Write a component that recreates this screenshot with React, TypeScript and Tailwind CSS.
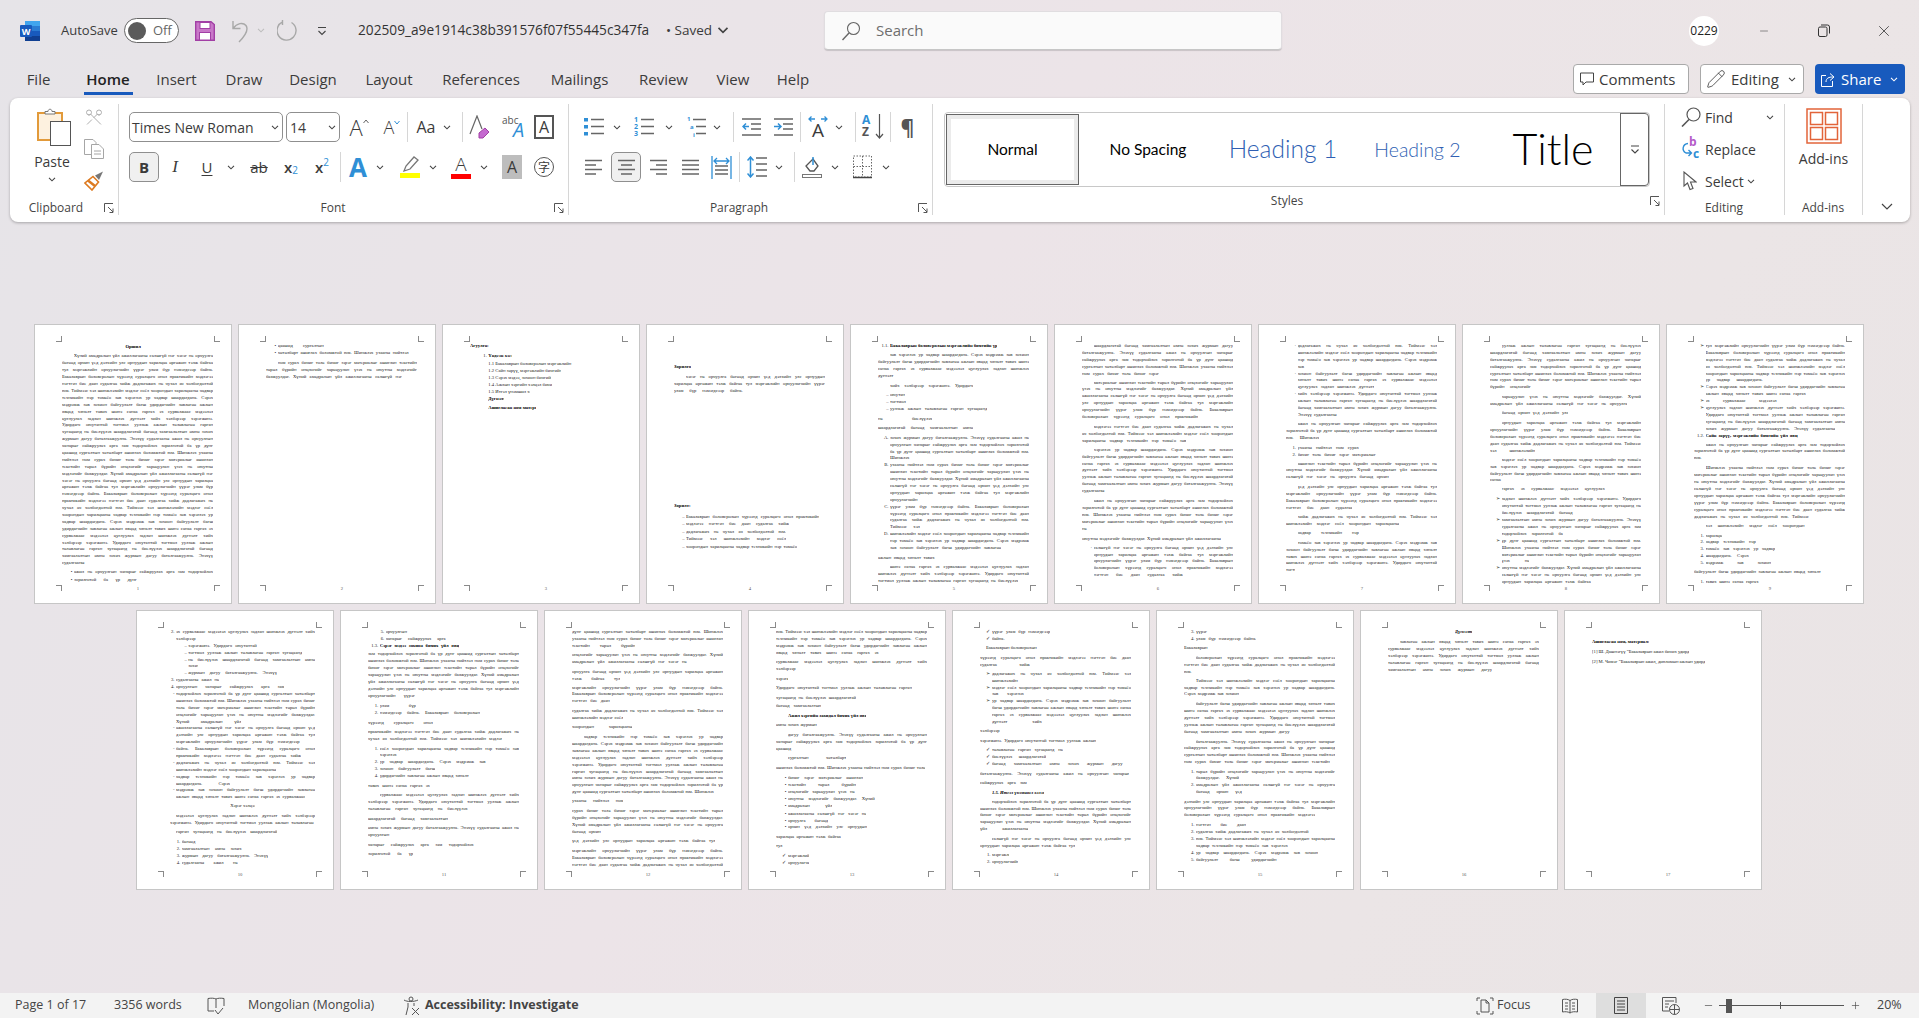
import { Minus, Pencil, Plus, Scissors, X } from "lucide-react";
import type { ReactNode } from "react";

// thumbnails: every page is a list of text blocks, broken into lines by hand
const CORPUS =
  "Хүний амьдралын үйл ажиллагааны салшгүй нэг хэсэг нь орчуулга бөгөөд орчин үед дэлхийн улс орнуудын харилцаа өргөжин тэлж байгаа тул мэргэжлийн орчуулагчийн үүрэг улам бүр нэмэгдсээр байна. Бакалаврын боловсролын хүрээнд суралцагч онол практикийн мэдлэгээ нэгтгэн бие даан судалгаа хийж дадлагажих нь чухал ач холбогдолтой юм. Тиймээс хэл шинжлэлийн мэдлэг соёл хоорондын харилцааны чадвар техникийн нэр томьёо зөв хэрэглэх ур чадвар шаардагдана. Сэрэх мэдрэмж зөв зохион байгуулалт багш удирдагчийн зөвлөгөө ажлын явцад хяналт тавих шинэ санаа гаргах эх сурвалжаас мэдээлэл цуглуулах задлан шинжлэх дүгнэлт хийх хэлбэрээр хэрэгжинэ. Удирдагч оюутантай тогтмол уулзаж ажлын төлөвлөгөө гарган хугацаанд нь биелүүлэх шаардлагатай бөгөөд хамгаалалтын өмнө зохих журмын дагуу баталгаажуулна. Энэхүү судалгааны ажил нь орчуулгын чанарыг сайжруулах арга зам тодорхойлох зорилготой ба үр дүнг цаашид сургалтын хөтөлбөрт ашиглах боломжтой юм. Шинжлэх ухааны нийтлэл ном сурах бичиг толь бичиг зэрэг материалыг ашиглан текстийн төрөл бүрийн онцлогийг харьцуулан үзэх нь оюутны мэдлэгийг баяжуулдаг.".split(
    " ",
  );
let cursor = 0;
function take(width: number) {
  const max = width / 2.28;
  let out = "";
  do {
    out += (out ? " " : "") + CORPUS[cursor];
    cursor = (cursor + 1) % CORPUS.length;
  } while ((out + " " + CORPUS[cursor]).length < max);
  return out;
}

type Block = {
  n: number;
  last: number;
  gap: number;
  ind?: number;
  first?: number;
  mark?: string;
  bold?: boolean;
  italic?: boolean;
  center?: boolean;
  text?: string;
};
const par = (n: number, last: number, gap = 3.1): Block => ({ n, last, gap, first: 11.7 });
const txt = (n: number, last: number, gap = 3.1, ind = 0): Block => ({ n, last, gap, ind });
const li = (mark: string, ind: number, n: number, last: number, gap = 0): Block => ({ n, last, gap, ind, mark });
const head = (text: string, last: number, gap = 3.1, ind = 0, mark?: string): Block => ({ n: 1, last, gap, ind, text, bold: true, mark });
const line = (text: string, last: number, gap = 0, ind = 0): Block => ({ n: 1, last, gap, ind, text });

const SPEC: { left?: number; blocks: Block[] }[] = [
  {
    blocks: [
      { n: 1, last: 0.16, gap: 0.5, bold: true, center: true, text: "Оршил" },
      par(31, 0.15),
      li("•", 12, 1, 1, 2.4),
      li("•", 12, 1, 0.45, 1.1),
    ],
  },
  { blocks: [li("•", 11.7, 1, 0.33, 0), li("•", 11.7, 1, 0.94, 0.4), par(3, 0.9)] },
  {
    blocks: [
      head("Агуулга:", 0.124, 0.3),
      head("Үндсэн хэсэг", 0.175, 3.1, 18.3, "1."),
      line("1.1 Бакалаврын боловсролын мэргэжлийн ба үр дүн", 0.63, 0.7, 18.3),
      line("1.2 Сайн зөрүү, мэргэжлийн бичгийн ажлын зорилго", 0.545, 0.3, 18.3),
      line("1.3 Сэрэх мэдээ, зохион бичгийн үйл явц", 0.475, 0, 18.3),
      line("1.4 Ажлын хэргийн хэлцэл бичих ур чадвар", 0.48, 0, 18.3),
      line("1.5 Итгэл үнэмшил хэлэх", 0.317, 0, 18.3),
      head("Дүгнэлт", 0.115, 0, 18.3),
      head("Ашигласан ном материал", 0.36, 2.1, 18.3),
    ],
  },
  {
    blocks: [
      head("Зорилго:", 0.11, 20.9),
      par(3, 0.455),
      head("Зорилт:", 0.11, 108.1),
      li("–", 12, 1, 0.96, 4.1),
      li("–", 12, 1, 0.74, 0.1),
      li("–", 12, 1, 0.72, 1.1),
      li("–", 12, 1, 0.72, 0.1),
      li("–", 12, 1, 0.8, 1.1),
    ],
  },
  {
    blocks: [
      head("Бакалаврын боловсролын мэргэжлийн бичгийн үр дүн", 0.77, 0, 12, "1.1."),
      par(4, 0.18, 2.1),
      txt(1, 0.6, 3.1, 12),
      li("–", 12, 1, 0.11, 2.1),
      li("–", 12, 1, 0.13),
      li("–", 12, 1, 0.7, 0.4),
      txt(1, 0.36),
      txt(1, 0.63, 2.1),
      li("A.", 12, 4, 0.21, 3.1),
      li("B.", 12, 6, 0.23),
      li("C.", 12, 4, 0.215),
      li("D.", 12, 3, 0.8),
      txt(1, 0.375),
      par(3, 0.93, 2.1),
    ],
  },
  {
    blocks: [
      par(5, 0.51, 0),
      par(6, 0.77, 2.1),
      par(3, 0.69),
      par(7, 0.19, 2.1),
      par(5, 0.13),
      txt(1, 0.92),
      li("·", 11.5, 5, 0.64, 2.1),
    ],
  },
  {
    blocks: [
      li("·", 11.5, 4, 0.135),
      li("·", 11.5, 3, 0.55),
      li("·", 11.5, 4, 0.28),
      par(3, 0.22, 2.1),
      li("1.", 11.5, 1, 0.44, 3.1),
      li("2.", 11.5, 1, 0.56),
      par(3, 0.68, 2.1),
      par(4, 0.44),
      par(2, 0.75, 2.1),
      txt(1, 0.44, 2.1, 11.5),
      par(5, 0.06),
    ],
  },
  {
    blocks: [
      par(7, 0.27, 0),
      par(2, 0.91),
      txt(1, 0.48, 2.1, 11.5),
      par(5, 0.3),
      par(4, 0.11, 2.1),
      txt(1, 0.74, 2.1, 11.5),
      li("➢", 11.5, 3, 0.51, 3.1),
      li("➢", 11.5, 3, 0.44),
      li("➢", 11.5, 4, 0.2),
      li("➢", 11.5, 3, 0.64),
    ],
  },
  {
    blocks: [
      li("➢", 11.5, 6, 0.41),
      li("➢", 11.5, 2, 0.72),
      li("➢", 11.5, 1, 0.51),
      li("➢", 11.5, 4, 0.93),
      head("Сайн зөрүү, мэргэжлийн бичгийн үйл явц", 0.66, 0, 11.5, "1.2."),
      par(3, 0.15, 2.1),
      par(8, 0.76),
      txt(1, 0.71, 2.1, 11.5),
      li("1.", 11.5, 1, 0.12, 3.1),
      li("2.", 11.5, 1, 0.36),
      li("3.", 11.5, 1, 0.5),
      li("4.", 11.5, 1, 0.31),
      li("5.", 11.5, 1, 0.47),
      txt(1, 0.84, 2.1),
      li("1.", 11.5, 1, 0.38, 3.1),
    ],
  },
  {
    left: 34,
    blocks: [
      li("2.", 6, 2, 0.16),
      li("–", 18.3, 1, 0.54),
      li("–", 18.3, 1, 0.9),
      li("–", 18.3, 2, 0.08),
      li("–", 18.3, 1, 0.7),
      li("3.", 6, 1, 0.31),
      li("4.", 6, 1, 0.78),
      li("-", 6, 5, 0.47),
      li("-", 6, 3, 0.89),
      li("-", 6, 2, 0.9),
      li("-", 6, 2, 0.72),
      li("-", 6, 2, 0.39),
      li("-", 6, 2, 0.93),
      { n: 1, last: 0.17, gap: 2.1, center: true, text: "Хэрэг хэлцээ бичих" },
      { n: 2, last: 0.99, gap: 3.1, first: 6 },
      txt(1, 0.73, 2.1, 6),
      li("1.", 11.7, 1, 0.16, 3.1),
      li("2.", 11.7, 1, 0.45),
      li("3.", 11.7, 1, 0.65),
      li("4.", 11.7, 1, 0.42),
    ],
  },
  {
    blocks: [
      li("5.", 17.7, 1, 0.29),
      li("6.", 17.7, 1, 0.45),
      head("Сэрэг мэдээ зохион бичих үйл явц", 0.57, 0, 11.7, "1.3."),
      txt(7, 0.31, 1.8),
      li("1.", 11.7, 1, 0.26, 3.1),
      li("2.", 11.7, 1, 0.72),
      txt(1, 0.43),
      txt(2, 0.89, 2.1),
      li("1.", 11.7, 2, 0.16, 3.1),
      li("2.", 11.7, 1, 0.76),
      li("3.", 11.7, 1, 0.4),
      li("4.", 11.7, 1, 0.64),
      txt(1, 0.41),
      par(3, 0.66, 2),
      txt(1, 0.53),
      txt(2, 0.24, 2.1),
      txt(1, 0.7),
      txt(1, 0.3, 2.1),
    ],
  },
  {
    blocks: [
      txt(3, 0.42, 0),
      txt(2, 0.76, 2.1),
      txt(2, 0.32),
      txt(3, 0.25, 2.1),
      txt(2, 0.34),
      txt(1, 0.4, 2.1),
      par(9, 0.94),
      txt(1, 0.34, 2.1),
      txt(4, 0.19),
      txt(1, 0.95, 2.1),
      txt(3, 1),
    ],
  },
  {
    blocks: [
      txt(4, 0.68, 0),
      txt(2, 0.24, 2.1),
      txt(1, 0.08),
      txt(1, 0.9, 2.1),
      txt(1, 0.53),
      txt(1, 0.3, 2.1),
      head("Ажил хэргийн захидал бичих үйл явц", 0.56, 3.1, 11.9, ""),
      txt(1, 0.27, 2.1),
      par(3, 0.11),
      txt(1, 0.42, 2.1, 11.9),
      txt(1, 0.99),
      li("•", 11.9, 1, 0.54, 3.1),
      li("•", 11.9, 1, 0.49),
      li("•", 11.9, 1, 0.48),
      li("•", 11.9, 1, 0.625),
      li("•", 11.9, 1, 0.32),
      li("•", 11.9, 1, 0.565, 1),
      li("•", 11.9, 1, 0.29),
      li("•", 11.9, 1, 0.57),
      txt(1, 0.43),
      txt(1, 0.06, 2.1),
      li("✓", 11.9, 1, 0.15, 3.1),
      li("✓", 11.9, 1, 0.155),
    ],
  },
  {
    blocks: [
      li("✓", 11.9, 1, 0.42),
      li("✓", 11.9, 1, 0.15),
      txt(1, 0.35, 2.1, 6),
      txt(2, 0.33),
      li("➢", 11.9, 2, 0.24, 2.1),
      li("➢", 11.9, 2, 0.23),
      li("➢", 11.9, 4, 0.36),
      txt(1, 0.25, 2.1),
      txt(1, 0.77),
      li("✓", 11.9, 1, 0.51, 2.1),
      li("✓", 11.9, 1, 0.39),
      li("✓", 11.9, 1, 0.94),
      txt(1, 0.99),
      txt(1, 0.31, 2.1),
      { n: 1, last: 0.375, gap: 3.1, ind: 11.9, bold: true, italic: true, text: "1.5. Итгэл үнэмшил хэлэх" },
      par(5, 0.32, 2.1),
      par(2, 0.63),
      li("1.", 11.9, 1, 0.12, 2.1),
      li("2.", 11.9, 1, 0.19),
    ],
  },
  {
    blocks: [
      li("3.", 12, 1, 0.11),
      li("4.", 12, 1, 0.435),
      txt(1, 0.3, 2.1),
      par(3, 0.1),
      par(3, 0.365, 2.1),
      par(5, 0.7),
      par(4, 0.965, 2.7),
      li("1.", 12, 2, 0.31, 2.5),
      li("2.", 12, 2, 0.33),
      txt(3, 0.87, 2.4),
      li("1.", 12, 1, 0.36, 3.1),
      li("2.", 12, 1, 0.81),
      li("3.", 12, 2, 0.66),
      li("4.", 12, 1, 0.88),
      li("5.", 12, 1, 0.58),
    ],
  },
  {
    blocks: [
      { n: 1, last: 0.115, gap: 0, bold: true, italic: true, center: true, text: "Дүгнэлт" },
      par(5, 0.69),
    ],
  },
  {
    blocks: [
      head("Ашигласан ном, материал:", 0.38, 10.2),
      line("[1] Ш. Дашнэгүү “Бакалаврын ажил бичих удирдамж” 2011 он", 0.64, 3.1),
      line("[2] М. Чимэг “Бакалаврын ажил, дипломын ажлын удирдамж” 2022 он", 0.75, 3.1),
    ],
  },
];

type Line = { text: string; ml: number; width: number; gap: number; mark?: string; bold?: boolean; italic?: boolean };
const PAGES = SPEC.map((page) => {
  const left = page.left ?? 28;
  const full = 179 - left;
  const lines: Line[] = [];
  page.blocks.forEach((b) => {
    for (let i = 0; i < b.n; i++) {
      const ind = (b.ind ?? 0) + (i === 0 ? (b.first ?? 0) : 0);
      const avail = full - ind;
      const width = (i === b.n - 1 ? b.last : 1) * avail;
      lines.push({
        text: b.text ?? take(width),
        ml: b.center ? (full - width) / 2 : ind,
        width,
        gap: i === 0 ? b.gap : 0,
        mark: i === 0 ? b.mark : undefined,
        bold: b.bold,
        italic: b.italic,
      });
    }
  });
  return { left, lines };
});

function DocPage({ index }: { index: number }) {
  const page = PAGES[index];
  return (
    <div className="relative h-[280px] w-[198px] shrink-0 overflow-hidden border border-[#c6c6c6] bg-white pt-[18px] font-['Liberation_Serif',serif] text-[4.67px] leading-[6.9px] text-[#222]">
      <span className="absolute left-[21px] top-[11px] h-[6px] w-[6px] border-b border-r border-[#8a8a8a]" />
      <span className="absolute left-[179px] top-[11px] h-[6px] w-[6px] border-b border-l border-[#8a8a8a]" />
      <span className="absolute left-[21px] top-[260px] h-[6px] w-[6px] border-r border-t border-[#8a8a8a]" />
      <span className="absolute left-[179px] top-[260px] h-[6px] w-[6px] border-l border-t border-[#8a8a8a]" />
      <div style={{ marginLeft: page.left - 1 }}>
        {page.lines.map((l, i) => (
          <div key={i} className="relative h-[6.9px]" style={{ marginTop: l.gap, marginLeft: l.ml, width: l.width }}>
            {l.mark && <span className="absolute right-full pr-[1.5px]">{l.mark}</span>}
            <div
              className={`overflow-hidden whitespace-nowrap text-justify [text-align-last:justify] ${l.bold ? "font-bold text-black" : ""} ${l.italic ? "italic" : ""}`}
            >
              {l.text}
            </div>
          </div>
        ))}
      </div>
      <span className="absolute left-0 top-[261px] w-[206px] text-center text-[#555]">{index + 1}</span>
    </div>
  );
}

// ribbon bits
function Chev({ className = "", color = "#444" }: { className?: string; color?: string }) {
  return (
    <div className={`flex w-[8px] shrink-0 justify-center ${className}`}>
      <svg width="8" height="5" viewBox="0 0 8 5" fill="none">
        <path d="M1 .8l3 3 3-3" stroke={color} strokeWidth="1.1" />
      </svg>
    </div>
  );
}
function Sep({ className = "" }: { className?: string }) {
  return <div className={`h-[30px] w-px shrink-0 bg-[#d6d6d6] ${className}`} />;
}
function Launcher({ className = "" }: { className?: string }) {
  return (
    <svg className={className} width="10" height="10" viewBox="0 0 10 10" fill="none" stroke="#555">
      <path d="M.5 9V.5H9M4 4l5 5M9 5.5V9.500H5.500" />
    </svg>
  );
}
function Align({ mode, className = "" }: { mode: "l" | "c" | "r" | "j"; className?: string }) {
  const rows =
    mode === "l"
      ? [[1, 18], [1, 12], [1, 18], [1, 12]]
      : mode === "c"
        ? [[1, 18], [4, 15], [1, 18], [4, 15]]
        : mode === "r"
          ? [[1, 18], [7, 18], [1, 18], [7, 18]]
          : [[1, 18], [1, 18], [1, 18], [1, 18]];
  return (
    <svg className={className} width="19" height="18" viewBox="0 0 19 18" stroke="#666" strokeWidth="1.5">
      {rows.map(([a, b], i) => (
        <path key={i} d={`M${a} ${2.5 + i * 4.5}H${b}`} />
      ))}
    </svg>
  );
}
function ListLines({ blue }: { blue: ReactNode }) {
  return (
    <svg width="20" height="24" viewBox="0 0 20 24" fill="none">
      <g stroke="#666" strokeWidth="1.5">
        <path d="M7 4.500H20M7 11.500H20M7 18.500H20" />
      </g>
      {blue}
    </svg>
  );
}
function Find() {
  return (
    <svg width="20" height="20" viewBox="0 0 20 20" fill="none" stroke="#555" strokeWidth="1.2">
      <circle cx="12.500" cy="7.500" r="6.500" fill="#fff" />
      <path d="M8 12.500L1 19.500" strokeWidth="1.6" />
    </svg>
  );
}
function Box({ className = "", children }: { className?: string; children: ReactNode }) {
  return <div className={`flex shrink-0 items-center justify-center ${className}`}>{children}</div>;
}
function GroupLabel({ text, className, launcher }: { text: string; className: string; launcher?: string }) {
  return (
    <div className="mt-auto flex h-[15px] shrink-0 items-center text-[12px] text-[#444]">
      <span className={`whitespace-nowrap text-center ${className}`}>{text}</span>
      {launcher && <Launcher className={launcher} />}
    </div>
  );
}

const TABS = [
  ["File", "ml-[27px] w-[23px]"],
  ["Home", "ml-[34px] w-[48px] font-semibold text-[#222]"],
  ["Insert", "ml-[23px] w-[43px]"],
  ["Draw", "ml-[27px] w-[38px]"],
  ["Design", "ml-[24px] w-[52px]"],
  ["Layout", "ml-[25px] w-[50px]"],
  ["References", "ml-[26px] w-[82px]"],
  ["Mailings", "ml-[26px] w-[63px]"],
  ["Review", "ml-[27px] w-[51px]"],
  ["View", "ml-[26px] w-[36px]"],
  ["Help", "ml-[25px] w-[34px]"],
];

export default function App() {
  return (
    <div className="flex h-[1018px] w-[1919px] flex-col overflow-hidden bg-[linear-gradient(120deg,#e6e4e8_0%,#ece4e8_45%,#ebe5e6_75%,#e9e4e5_100%)] font-['Open_Sans',sans-serif] text-[#3b3b3b]">
      {/* title bar */}
      <div className="flex h-[61px] shrink-0 items-center">
        <svg className="ml-[20px] shrink-0" width="20" height="20" viewBox="0 0 20 20">
          <rect x="5" width="15" height="5" fill="#41a5ee" />
          <rect x="5" y="5" width="15" height="5" fill="#2b7cd3" />
          <rect x="5" y="10" width="15" height="5" fill="#185abd" />
          <rect x="5" y="15" width="15" height="5" fill="#103f91" />
          <rect y="4" width="12" height="12" rx="1" fill="#185abd" />
          <text x="6" y="13.500" textAnchor="middle" fontSize="9" fontWeight="700" fill="#fff">
            W
          </text>
        </svg>
        <span className="ml-[21px] w-[53px] shrink-0 whitespace-nowrap text-[13px]">AutoSave</span>
        <div className="ml-[10px] flex h-[25px] w-[55px] shrink-0 items-center rounded-full border border-[#666] bg-white pl-[3px]">
          <span className="h-[18px] w-[18px] rounded-full bg-[#5b5b5b]" />
          <span className="ml-[7px] text-[13px] text-[#666]">Off</span>
        </div>
        <svg className="ml-[16px] shrink-0" width="20" height="20" viewBox="0 0 20 20">
          <path d="M.7.700H16L19.300 3.500V19.300H.7Z" fill="#c878c8" stroke="#a23fa5" strokeWidth="1.4" />
          <rect x="5" y="1.500" width="10" height="6" fill="#fff" stroke="#a23fa5" />
          <rect x="4.500" y="11.500" width="11" height="7.500" fill="#fff" stroke="#a23fa5" />
        </svg>
        <svg className="ml-[16px] shrink-0" width="18" height="24" viewBox="0 0 18 24" fill="none" stroke="#a8a8a8" strokeWidth="1.4">
          <path d="M2 2v7.500h7.500M2 9.500C6 4 12 3 15 6.500C18 11 14 17 8 23" />
        </svg>
        <Chev className="ml-[8px]" color="#bdbdbd" />
        <svg className="ml-[12px] shrink-0" width="21" height="23" viewBox="0 0 21 23" fill="none" stroke="#a8a8a8" strokeWidth="1.4">
          <path d="M14.500 3.500A9.500 9.500 0 1 1 5.500 3M5.500 1v5" />
        </svg>
        <svg className="ml-[18px] shrink-0" width="12" height="12" viewBox="0 0 12 12" fill="none" stroke="#444" strokeWidth="1.100">
          <path d="M2 2.500H10M2.500 6L6 9.500 9.500 6" />
        </svg>
        <span className="ml-[30px] w-[299px] shrink-0 whitespace-nowrap text-[13.700px] text-[#333]">202509_a9e1914c38b391576f07f55445c347fa</span>
        <span className="ml-[9px] w-[50px] shrink-0 whitespace-nowrap text-[13.500px]">• Saved</span>
        <Chev className="ml-[3px] [&_svg]:scale-150" />
        <div className="ml-[97px] flex h-[39px] w-[458px] shrink-0 items-center rounded-[4px] border border-[#e0dde0] border-b-[#c6c6c6] bg-[#fafafa] pl-[16px] shadow-[0_1px_1px_rgba(0,0,0,.15)]">
          <svg width="20" height="20" viewBox="0 0 20 20" fill="none" stroke="#666" strokeWidth="1.100">
            <circle cx="12.500" cy="7.500" r="6" />
            <path d="M8 12L1.500 19" strokeWidth="1.400" />
          </svg>
          <span className="ml-[15px] text-[15px] text-[#6e6e6e]">Search</span>
        </div>
        <div className="ml-[407px] flex h-[30px] w-[30px] shrink-0 items-center justify-center rounded-full bg-white text-[12px] text-[#222]">0229</div>
        <Box className="ml-[39px] w-[12px]">
          <Minus size={14} strokeWidth={1.100} />
        </Box>
        <Box className="ml-[48px] w-[12px]">
          <svg width="12" height="13" viewBox="0 0 12 13" fill="none" stroke="#333">
            <rect x=".5" y="3" width="8.500" height="9.500" rx="1.500" />
            <path d="M3 1h6.500A2 2 0 0 1 11.500 3v6.500" />
          </svg>
        </Box>
        <Box className="ml-[48px] w-[12px]">
          <X size={18} strokeWidth={1.100} className="shrink-0" />
        </Box>
      </div>

      {/* tabs */}
      <div className="flex h-[37px] shrink-0 items-start">
        {TABS.map(([t, cls]) => (
          <div key={t} className={`relative flex h-[37px] shrink-0 items-center justify-center whitespace-nowrap text-[15px] ${cls}`}>
            {t}
            {t === "Home" && <span className="absolute left-0 top-[31px] h-[3px] w-[49px] bg-[#185abd]" />}
          </div>
        ))}
        <div className="ml-auto mr-[14px] mt-[3px] flex items-center gap-[11px] text-[15px]">
          <div className="flex h-[30px] w-[116px] items-center rounded-[4px] border border-[#a9a9a9] bg-white pl-[6px]">
            <svg width="14" height="14" viewBox="0 0 14 14" fill="none" stroke="#444">
              <path d="M.5 1H13.500V10H6L3 13V10H.5Z" />
            </svg>
            <span className="ml-[5px]">Comments</span>
          </div>
          <div className="flex h-[30px] w-[104px] items-center rounded-[4px] border border-[#a9a9a9] bg-white pl-[5px]">
            <Pencil size={20} strokeWidth={1} />
            <span className="ml-[5px]">Editing</span>
            <Chev className="ml-[9px]" />
          </div>
          <div className="flex h-[30px] w-[90px] items-center rounded-[4px] bg-[#185abd] pl-[6px] text-white">
            <svg width="14" height="15" viewBox="0 0 14 15" fill="none" stroke="#fff">
              <path d="M5 3.500H.5V14.500H11.500V9M5 10C5 6 8 5 12 5M9 1.500L13 5 9 8.500" />
            </svg>
            <span className="ml-[6px]">Share</span>
            <Chev className="ml-[9px]" color="#fff" />
          </div>
        </div>
      </div>

      {/* ribbon */}
      <div className="ml-[10px] flex h-[124px] w-[1900px] shrink-0 rounded-[8px] bg-white shadow-[0_1px_3px_rgba(0,0,0,.28)]">
        {/* clipboard */}
        <div className="mt-[6px] flex h-[111px] w-[109px] shrink-0 flex-col border-r border-[#d6d6d6]">
          <div className="flex">
            <div className="ml-[10px] flex w-[64px] flex-col items-center pt-[4px]">
              <svg className="ml-[4px]" width="34" height="38" viewBox="0 0 34 38">
                <rect x="1" y="5" width="24" height="27" fill="#fdf1df" stroke="#e29a3a" strokeWidth="2" />
                <path d="M8 6V3.500H11C11 .5 15 .5 15 3.500H18V6Z" fill="#fff" stroke="#777" />
                <rect x="13.500" y="13.500" width="20" height="24" fill="#fff" stroke="#555" />
              </svg>
              <span className="mt-[6px] text-[14px] leading-[20px]">Paste</span>
              <Chev className="mt-[5px]" />
            </div>
            <div className="flex w-[20px] flex-col items-center">
              <Box className="mt-[3px] h-[20px] w-[20px]">
                <Scissors size={21} strokeWidth={1.100} color="#a6a6a6" className="rotate-90" />
              </Box>
              <svg className="mt-[12px]" width="20" height="20" viewBox="0 0 20 20" fill="#fff" stroke="#a6a6a6">
                <path d="M.5.5H9L12 3.500V15.500H.5Z" />
                <path d="M7.500 5.500H15L19.500 10V19.500H7.500Z" />
                <path d="M10 12H17M10 15H17" />
              </svg>
              <svg className="mt-[12px]" width="20" height="20" viewBox="0 0 20 20" fill="none">
                <path d="M11 4.500L19 .5 15 9Z" fill="#777" />
                <path d="M9 5.500L14.500 11 8 19 1 12Z" fill="#fff" stroke="#dd7a20" strokeWidth="1.600" />
                <path d="M4 9.500L11 15" stroke="#dd7a20" strokeWidth="2.500" />
              </svg>
            </div>
          </div>
          <GroupLabel text="Clipboard" className="ml-[16px] w-[60px]" launcher="ml-auto mr-[4px]" />
        </div>

        {/* font */}
        <div className="mt-[6px] flex h-[111px] w-[450px] shrink-0 flex-col border-r border-[#d6d6d6] pt-[8px]">
          <div className="flex h-[30px] items-center">
            <div className="ml-[10px] flex h-[30px] w-[154px] shrink-0 items-center rounded-[5px] border border-[#8f8f8f] pl-[2px] text-[14px]">
              <span className="whitespace-nowrap">Times New Roman</span>
              <Chev className="ml-auto mr-[3px]" />
            </div>
            <div className="ml-[3px] flex h-[30px] w-[54px] shrink-0 items-center rounded-[5px] border border-[#8f8f8f] pl-[3px] text-[14px]">
              14
              <Chev className="ml-auto mr-[3px]" />
            </div>
            <Box className="ml-[9px] w-[20px] text-[22px] font-light leading-none">
              A
              <svg className="mb-[12px] shrink-0" width="6" height="5" viewBox="0 0 6 5" fill="none" stroke="#666">
                <path d="M.5 4L3 1l2.500 3" />
              </svg>
            </Box>
            <Box className="ml-[15px] w-[16px] text-[18px] font-light leading-none">
              A
              <svg className="mb-[10px] shrink-0" width="6" height="5" viewBox="0 0 6 5" fill="none" stroke="#2f8fd6">
                <path d="M.5 1L3 4l2.500-3" />
              </svg>
            </Box>
            <Sep className="ml-[7px]" />
            <Box className="ml-[7px] w-[22px] whitespace-nowrap text-[16px] leading-none">Aa</Box>
            <Chev className="ml-[6px]" />
            <Sep className="ml-[11px]" />
            <svg className="ml-[6px] shrink-0" width="21" height="24" viewBox="0 0 21 24" fill="none">
              <path d="M1 19L8 1l5 13" stroke="#666" strokeWidth="1.200" />
              <path d="M10 18l6-5 4 4-6 6h-4Z" fill="#c56ad0" stroke="#a23fa5" />
            </svg>
            <div className="relative ml-[12px] h-[24px] w-[21px] shrink-0">
              <span className="block text-[10px] leading-[10px] text-[#555]">abc</span>
              <span className="absolute left-[11px] top-[6px] text-[20px] italic leading-[18px] text-[#2f8fd6]">A</span>
            </div>
            <Box className="ml-[11px] h-[24px] w-[20px] border-2 border-[#555] text-[16px] leading-none">A</Box>
          </div>
          <div className="mt-[10px] flex h-[30px] items-center">
            <Box className="ml-[10px] h-[30px] w-[30px] rounded-[5px] border border-[#8f8f8f] bg-[#f0f0f0] text-[15px] font-bold">B</Box>
            <Box className="ml-[6px] w-[20px] font-['Liberation_Serif',serif] text-[17px] italic">I</Box>
            <Box className="ml-[12px] w-[20px] text-[15px] underline underline-offset-2">U</Box>
            <Chev className="ml-[10px]" />
            <Box className="ml-[14px] w-[20px] text-[15px] leading-none line-through">ab</Box>
            <Box className="ml-[12px] w-[20px] text-[15px] font-semibold">
              x<sub className="text-[10px] font-normal text-[#2f8fd6]">2</sub>
            </Box>
            <Box className="ml-[11px] w-[20px] text-[15px] font-semibold">
              x<sup className="text-[10px] font-normal text-[#2f8fd6]">2</sup>
            </Box>
            <Sep className="ml-[8px]" />
            <Box className="ml-[8px] w-[18px] text-[26px] font-bold leading-none text-[#2f8fd6]">A</Box>
            <Chev className="ml-[9px]" />
            <div className="ml-[16px] flex w-[20px] shrink-0 flex-col items-center">
              <svg width="20" height="17" viewBox="0 0 20 17" fill="none">
                <path d="M4 15l2-5 8-9 4 3-8 9Z" fill="#fff" stroke="#777" strokeWidth="1.300" />
              </svg>
              <span className="h-[5px] w-[20px] bg-[#ffff00]" />
            </div>
            <Chev className="ml-[9px]" />
            <div className="ml-[14px] flex w-[20px] shrink-0 flex-col items-center">
              <span className="h-[18px] text-[19px] font-light leading-[18px]">A</span>
              <span className="mt-[1px] h-[5px] w-[20px] bg-[#ff0000]" />
            </div>
            <Chev className="ml-[9px]" />
            <Box className="ml-[14px] h-[24px] w-[20px] bg-[#bdbdbd] text-[16px] leading-none">A</Box>
            <Box className="ml-[12px] h-[20px] w-[20px] rounded-full border border-[#555] font-['Noto_Sans_CJK_SC',sans-serif] text-[12px] leading-none">字</Box>
          </div>
          <GroupLabel text="Font" className="ml-[200px] w-[28px]" launcher="ml-auto mr-[4px]" />
        </div>

        {/* paragraph */}
        <div className="mt-[6px] flex h-[111px] w-[364px] shrink-0 flex-col border-r border-[#d6d6d6] pt-[8px]">
          <div className="flex h-[30px] items-center">
            <div className="ml-[15px] shrink-0">
              <ListLines
                blue={
                  <g fill="#2f8fd6">
                    <rect y="3" width="4" height="3.500" />
                    <rect y="10" width="4" height="3.500" />
                    <rect y="17" width="4" height="3.500" />
                  </g>
                }
              />
            </div>
            <Chev className="ml-[9px]" />
            <div className="ml-[13px] shrink-0">
              <ListLines
                blue={
                  <g fontSize="7" fontWeight="700" fill="#2f8fd6">
                    <text y="7">1</text>
                    <text y="14">2</text>
                    <text y="21">3</text>
                  </g>
                }
              />
            </div>
            <Chev className="ml-[11px]" />
            <svg className="ml-[14px] shrink-0" width="19" height="24" viewBox="0 0 19 24" fill="none">
              <path d="M6 4.500H19M9 11.500H19M9 18.500H19" stroke="#666" strokeWidth="1.500" />
              <g fontSize="6" fontWeight="700" fill="#2f8fd6">
                <text y="6">1</text>
                <text x="3" y="14">a</text>
                <text x="6" y="22">i</text>
              </g>
            </svg>
            <Chev className="ml-[7px]" />
            <Sep className="ml-[12px]" />
            <svg className="ml-[8px] shrink-0" width="19" height="20" viewBox="0 0 19 20" fill="none">
              <path d="M0 2H19M9 7H19M9 12H19M0 18H19" stroke="#666" strokeWidth="1.500" />
              <path d="M7 9.500H1M4 6.500l-3 3 3 3" stroke="#2f8fd6" strokeWidth="1.500" />
            </svg>
            <svg className="ml-[13px] shrink-0" width="19" height="20" viewBox="0 0 19 20" fill="none">
              <path d="M0 2H19M9 7H19M9 12H19M0 18H19" stroke="#666" strokeWidth="1.500" />
              <path d="M0 9.500H7M4 6.500l3 3-3 3" stroke="#2f8fd6" strokeWidth="1.500" />
            </svg>
            <Sep className="ml-[7px]" />
            <div className="relative ml-[7px] flex h-[24px] w-[20px] shrink-0 items-end justify-center text-[19px] leading-[18px]">
              A
              <svg className="absolute left-0 top-0" width="20" height="8" viewBox="0 0 20 8" fill="none" stroke="#2f8fd6" strokeWidth="1.300">
                <path d="M1 4H7M3.500 1.500L1 4l2.500 2.500M13 4H19M16.500 1.500L19 4l-2.500 2.500" />
              </svg>
            </div>
            <Chev className="ml-[7px]" />
            <Sep className="ml-[12px]" />
            <div className="relative ml-[6px] h-[26px] w-[22px] shrink-0 text-[12px] font-bold leading-[12px]">
              <span className="block text-[#2f8fd6]">A</span>
              <span className="block text-[#555]">Z</span>
              <svg className="absolute right-0 top-0" width="9" height="25" viewBox="0 0 9 25" fill="none" stroke="#555" strokeWidth="1.200">
                <path d="M4.500 0V24M1 20l3.500 4L8 20" />
              </svg>
            </div>
            <Sep className="ml-[6px]" />
            <Box className="ml-[9px] w-[15px] text-[21px] font-bold leading-none text-[#555]">¶</Box>
          </div>
          <div className="mt-[10px] flex h-[30px] items-center">
            <Align mode="l" className="ml-[15px] shrink-0" />
            <Box className="ml-[8px] h-[30px] w-[30px] rounded-[5px] border border-[#8f8f8f] bg-[#f0f0f0]">
              <Align mode="c" />
            </Box>
            <Align mode="r" className="ml-[8px] shrink-0" />
            <Align mode="j" className="ml-[13px] shrink-0" />
            <svg className="ml-[11px] shrink-0" width="21" height="24" viewBox="0 0 21 24" fill="none">
              <path d="M4 11H17M4 15H17M4 19H17" stroke="#666" strokeWidth="1.400" />
              <path d="M1 1V24M20 1V24M3 6H18M6 3L3 6l3 3M15 3l3 3-3 3" stroke="#2f8fd6" strokeWidth="1.300" />
            </svg>
            <Sep className="ml-[7px]" />
            <svg className="ml-[7px] shrink-0" width="20" height="22" viewBox="0 0 20 22" fill="none">
              <path d="M9 2H20M9 8H20M9 14H20M9 20H20" stroke="#666" strokeWidth="1.500" />
              <path d="M3.500 1V21M.5 4.500L3.500 1l3 3.500M.5 17.500l3 3.500 3-3.500" stroke="#2f8fd6" strokeWidth="1.500" />
            </svg>
            <Chev className="ml-[8px]" />
            <Sep className="ml-[11px]" />
            <div className="ml-[7px] flex w-[20px] shrink-0 flex-col items-center">
              <svg width="20" height="18" viewBox="0 0 20 18" fill="none">
                <path d="M4 10L11 3l5 7-4 5H8Z" fill="#fff" stroke="#555" strokeWidth="1.300" />
                <path d="M11 1V9" stroke="#2f8fd6" strokeWidth="1.500" />
              </svg>
              <span className="h-[4px] w-[20px] border border-[#777]" />
            </div>
            <Chev className="ml-[9px]" />
            <svg className="ml-[14px] shrink-0" width="19" height="24" viewBox="0 0 19 24" fill="none" stroke="#666" strokeDasharray="1.500 1.500">
              <path d="M.5 1H18.500V22H.5ZM9.500 1V22M.5 11.500H18.500" />
              <path d="M0 22.500H19" strokeDasharray="none" strokeWidth="1.500" stroke="#444" />
            </svg>
            <Chev className="ml-[10px]" />
          </div>
          <GroupLabel text="Paragraph" className="ml-[139px] w-[62px]" launcher="ml-auto mr-[4px]" />
        </div>

        {/* styles */}
        <div className="mt-[6px] flex h-[111px] w-[732px] shrink-0 flex-col border-r border-[#d6d6d6] pt-[8px] font-['Lato',sans-serif]">
          <div className="ml-[11px] flex h-[75px] w-[706px] rounded-[4px] border border-[#c8c8c8] text-black">
            <div className="my-[1px] ml-[1px] flex w-[133px] shrink-0 items-center justify-center border border-[#666] outline outline-[4px] -outline-offset-[5px] outline-[#ebebeb] text-[15.500px]">Normal</div>
            <Box className="w-[138px] text-[15.500px]">No Spacing</Box>
            <Box className="w-[132px] text-[24.500px] font-light text-[#2f5fb3]">Heading 1</Box>
            <Box className="w-[137px] text-[19.500px] font-light text-[#2f5fb3]">Heading 2</Box>
            <Box className="w-[134px] text-[43px] font-light">Title</Box>
            <div className="flex w-[29px] shrink-0 flex-col items-center justify-center rounded-r-[4px] border-l border-[#666] outline outline-[1px] -outline-offset-[1px] outline-[#666]">
              <svg width="10" height="10" viewBox="0 0 10 10" fill="none" stroke="#444" strokeWidth="1.100">
                <path d="M1 1H9M1.500 4.500L5 8l3.500-3.500" />
              </svg>
            </div>
          </div>
          <div className="font-['Open_Sans',sans-serif]">
            <GroupLabel text="Styles" className="ml-[337px] mt-[12px] w-[34px]" launcher="ml-auto mr-[4px] mt-[12px]" />
          </div>
        </div>

        {/* editing */}
        <div className="mt-[6px] flex h-[111px] w-[120px] shrink-0 flex-col border-r border-[#d6d6d6] pt-[3px] text-[14px]">
          <div className="flex h-[20px] items-center pl-[16px]">
            <Find />
            <span className="ml-[4px]">Find</span>
            <Chev className="ml-[33px]" />
          </div>
          <div className="mt-[12px] flex h-[20px] items-center pl-[16px]">
            <div className="relative h-[20px] w-[20px] shrink-0 text-[12px] font-bold leading-[11px]">
              <span className="absolute left-[8px] top-[-3px] text-[#b45bc8]">b</span>
              <span className="absolute left-[12px] top-[9px] text-[#2f8fd6]">c</span>
              <svg className="absolute left-0 top-[3px]" width="12" height="17" viewBox="0 0 12 17" fill="none" stroke="#2f8fd6" strokeWidth="1.400">
                <path d="M7 1.500C2 2 0 8 5 11H10M7.500 8l3 3-3 3" />
              </svg>
            </div>
            <span className="ml-[4px]">Replace</span>
          </div>
          <div className="mt-[12px] flex h-[20px] items-center pl-[18px]">
            <svg width="14" height="20" viewBox="0 0 14 20" fill="#fff" stroke="#555" strokeWidth="1.100">
              <path d="M1 1V15L4.500 12 7 18.500 10 17.500 7.500 11H13Z" />
            </svg>
            <span className="ml-[8px]">Select</span>
            <Chev className="ml-[3px]" />
          </div>
          <GroupLabel text="Editing" className="ml-[38px] w-[42px]" />
        </div>

        {/* add-ins */}
        <div className="mt-[6px] flex h-[111px] w-[78px] shrink-0 flex-col items-stretch border-r border-[#d6d6d6] pt-[4px]">
          <svg className="ml-[21px]" width="36" height="36" viewBox="0 0 36 36" fill="none" stroke="#e2643a" strokeWidth="1.500">
            <rect x="1" y="1" width="34" height="34" />
            <rect x="4.500" y="4.500" width="12" height="12" />
            <rect x="19.500" y="4.500" width="12" height="12" />
            <rect x="4.500" y="19.500" width="12" height="12" />
            <rect x="19.500" y="19.500" width="12" height="12" />
          </svg>
          <span className="mt-[5px] text-center text-[14px] leading-[20px]">Add-ins</span>
          <GroupLabel text="Add-ins" className="w-[76px]" />
        </div>
        <div className="flex flex-1 items-end justify-center pb-[12px]">
          <svg width="12" height="7" viewBox="0 0 12 7" fill="none" stroke="#444" strokeWidth="1.200">
            <path d="M1 1l5 5 5-5" />
          </svg>
        </div>
      </div>

      {/* thumbnails */}
      <div className="mt-[102px] flex w-[1898px] flex-col items-center gap-[6px]">
        <div className="flex gap-[6px]">
          {PAGES.slice(0, 9).map((_, i) => (
            <DocPage key={i} index={i} />
          ))}
        </div>
        <div className="flex gap-[6px]">
          {PAGES.slice(9).map((_, i) => (
            <DocPage key={i} index={i + 9} />
          ))}
        </div>
      </div>

      {/* status bar */}
      <div className="mt-auto flex h-[25px] shrink-0 items-center bg-[#f3f3f3] text-[12.500px] text-[#444]">
        <span className="ml-[15px] w-[74px] shrink-0 whitespace-nowrap">Page 1 of 17</span>
        <span className="ml-[25px] w-[68px] shrink-0 whitespace-nowrap">3356 words</span>
        <svg className="ml-[25px] shrink-0" width="18" height="18" viewBox="0 0 18 18" fill="none" stroke="#555">
          <path d="M9 2C7 1 4 1 1 1.500V14H7M9 2C11 1 14 1 17 1.500V9M9 2V11M8 13l3 4 5-6" />
        </svg>
        <span className="ml-[23px] w-[130px] shrink-0 whitespace-nowrap">Mongolian (Mongolia)</span>
        <svg className="ml-[25px] shrink-0" width="17" height="20" viewBox="0 0 17 20" fill="none" stroke="#555">
          <circle cx="8" cy="3" r="2" />
          <path d="M1 4c3 2 10 2 14 0M5 7v4l-2 8M11 7v3M9 12l7 7M16 12l-7 7" />
        </svg>
        <span className="ml-[5px] whitespace-nowrap font-bold">Accessibility: Investigate</span>
        <svg className="ml-auto shrink-0" width="18" height="18" viewBox="0 0 18 18" fill="none" stroke="#555">
          <path d="M1 4V1H4M14 1H17V4M1 14V17H4M14 17H17V14" />
          <path d="M5 3H10L13 6V15H5ZM10 3V6H13" />
        </svg>
        <span className="ml-[3px] w-[33px] shrink-0">Focus</span>
        <svg className="ml-[32px] shrink-0" width="16" height="16" viewBox="0 0 16 16" fill="none" stroke="#555">
          <path d="M8 2.500C6 1 3 1 .5 1.500V14C3 13.500 6 13.500 8 15 10 13.500 13 13.500 15.500 14V1.500C13 1 10 1 8 2.500ZM8 2.500V15M3 5H6M3 8H6M3 11H6M10 5H13M10 8H13M10 11H13" />
        </svg>
        <div className="ml-[18px] flex h-[25px] w-[50px] shrink-0 items-center justify-center bg-[#dedede]">
          <svg width="14" height="17" viewBox="0 0 14 17" fill="none" stroke="#444">
            <path d="M.5.5H13.500V16.500H.5ZM3 4H11M3 7H11M3 10H11M3 13H11" />
          </svg>
        </div>
        <svg className="ml-[16px] shrink-0" width="18" height="18" viewBox="0 0 18 18" fill="none" stroke="#555">
          <path d="M7 14H.5V.5H14V6M3 4H12M3 7H7M3 10H6" />
          <circle cx="12.500" cy="12.500" r="5" fill="#f3f3f3" />
          <path d="M7.500 12.500H17.500M12.500 7.500V17.500" />
        </svg>
        <Minus size={11} strokeWidth={1.400} className="ml-[23px] shrink-0" />
        <div className="ml-[5px] flex h-[14px] w-[125px] shrink-0 items-center">
          <div className="h-px w-[7px] bg-[#555]" />
          <div className="h-[14px] w-[6px] bg-[#555]" />
          <div className="h-px w-[48px] bg-[#555]" />
          <div className="h-[7px] w-px bg-[#555]" />
          <div className="h-px w-[63px] bg-[#555]" />
        </div>
        <Plus size={11} strokeWidth={1.400} className="ml-[6px] shrink-0" />
        <span className="ml-[16px] w-[24px] shrink-0 whitespace-nowrap">20%</span>
        <span className="w-[18px] shrink-0" />
      </div>
    </div>
  );
}
